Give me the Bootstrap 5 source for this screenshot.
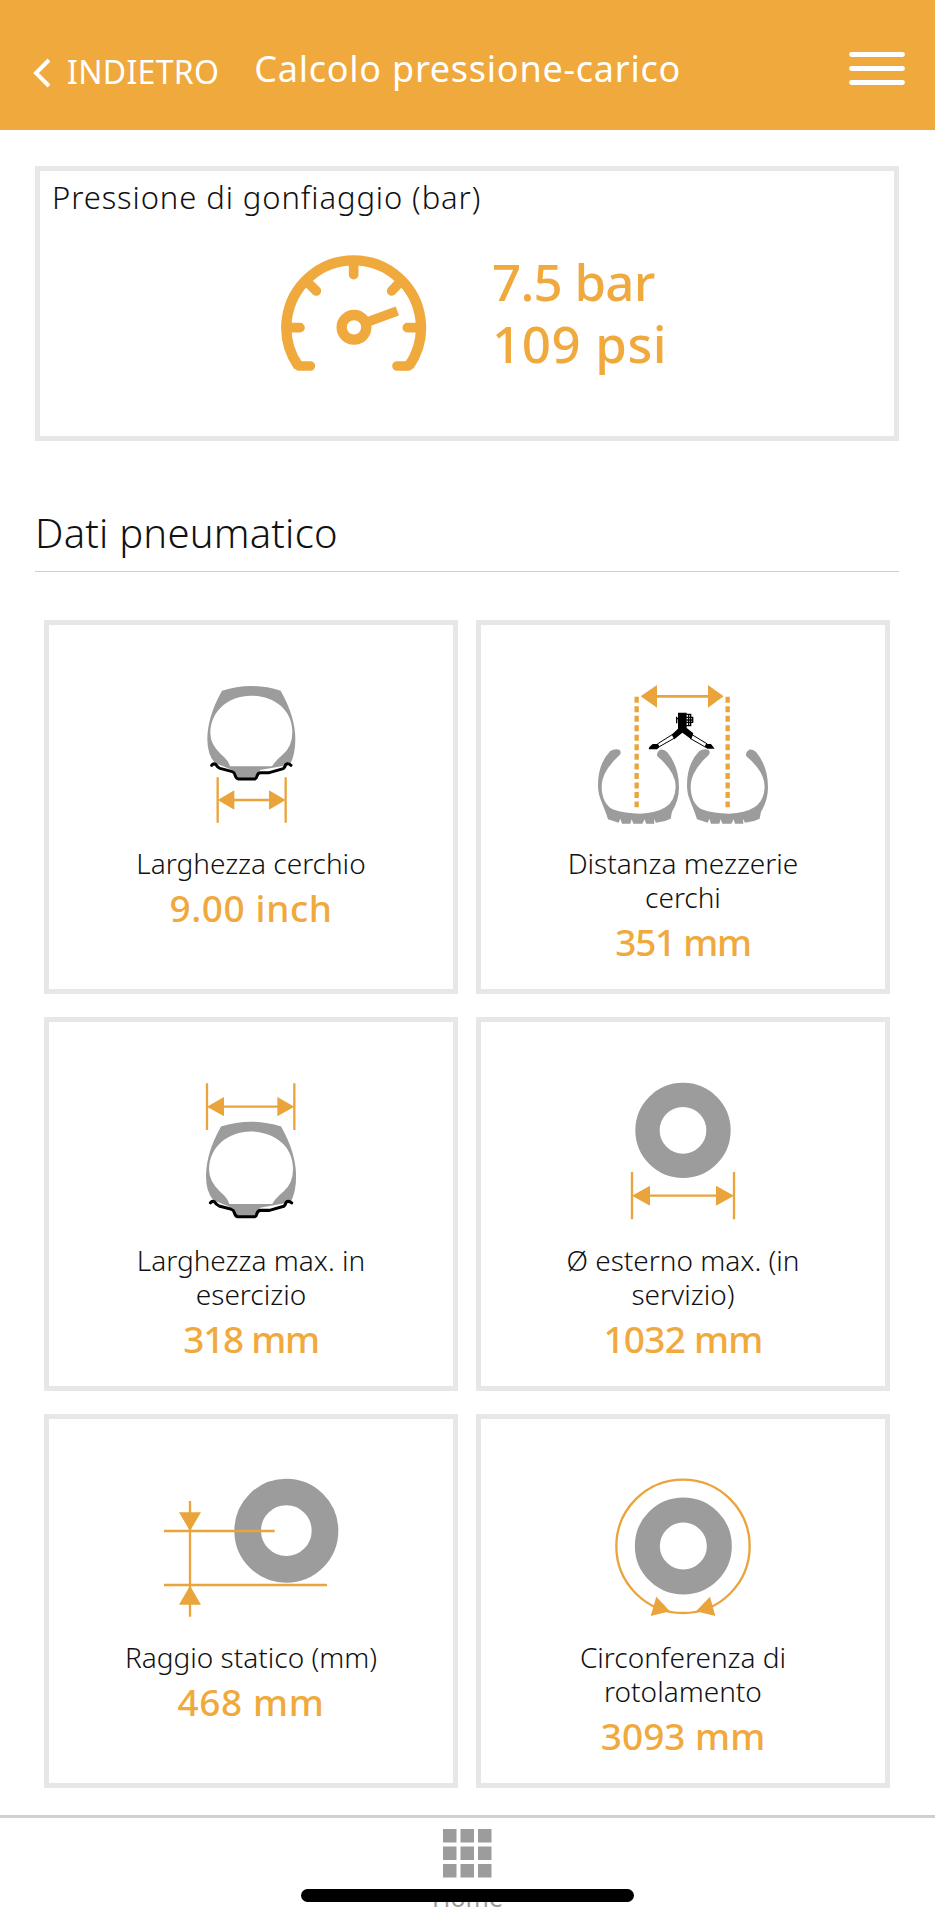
<!DOCTYPE html>
<html lang="it">
<head>
<meta charset="utf-8">
<meta name="viewport" content="width=device-width, initial-scale=1">
<title>Calcolo pressione-carico</title>
<link href="https://cdn.jsdelivr.net/npm/bootstrap@5.3.0/dist/css/bootstrap.min.css" rel="stylesheet">
<style>
:root{--amber:#f0a93c;--tyre:#9c9c9c}
body{font-family:"Noto Sans","Open Sans",sans-serif;font-weight:300;color:#111;background:#fff;height:1920px;overflow:hidden}
.topbar{height:130px;background:var(--amber);color:#fff;padding:11px 30px 0 33px}
.back{font-size:32px;font-weight:400;line-height:44px;margin:3px 0 0 16px;letter-spacing:.3px}
.chev{margin-top:5px}
.heading{font-size:36px;font-weight:400;line-height:44px;margin:-4px 0 0 35px;letter-spacing:.75px}
.burger{margin-top:-3px}
.panel{border:5px solid #e7e7e7;height:275px;margin:36px 36px 0 35px}
.panel-label{font-size:31px;line-height:40px;padding:6px 0 0 12px;letter-spacing:.9px}
.reading{font-size:51px;line-height:62px;font-weight:500;color:var(--amber)}
.readings{margin-left:240px;margin-top:33px}
.reading-texts{margin-left:62px}
.section-title{font-size:40px;line-height:54px;font-weight:300;margin:65px 36px 0 35px;height:66px;border-bottom:1px solid #cfcfcf;letter-spacing:.2px}
.tiles{display:grid;grid-template-columns:414px 414px;gap:23px 18px;margin:48px 0 0 44px}
.tile{border:5px solid #e7e7e7;height:374px;padding-top:55px;text-align:center}
.tile svg{display:block;margin:0 auto 16px}
.tile-label{font-size:28px;line-height:34px}
.tile-value{font-size:37px;line-height:44px;margin-top:6px;font-weight:500;color:var(--amber)}
.snug{letter-spacing:-1.3px}
.snug-sm{letter-spacing:-.75px}
.airy{letter-spacing:.6px}
.tabbar{height:105px;border-top:3px solid #d0d0d0;margin-top:27px;padding-top:11px}
.tab-text{font-size:25px;line-height:34px;font-weight:400;color:var(--tyre);margin-top:2px}
.home-bar{left:301px;top:71px;width:333px;height:13px;border-radius:7px;background:#000}
.ln{fill:none;stroke:#eaa43c;stroke-width:7}
.ar{fill:#eaa43c}
.ty{fill:var(--tyre)}
.rim{fill:none;stroke:#000;stroke-width:9;stroke-linecap:round;stroke-linejoin:round}
</style>
</head>
<body>
<svg width="0" height="0" class="position-absolute" aria-hidden="true">
  <defs>
    <g id="section">
      <path class="ty" fill-rule="evenodd" d="M126 62Q213 34 302 62Q346 140 346 208Q346 254 330 284L240 300L232 326H172L162 302L104 278Q82 254 82 208Q82 140 126 62ZM150 289H276Q286 272 310 252Q337 228 337 186C337 115 277 77 213 77C149 77 91 120 91 190Q91 222 122 252Q146 272 150 289Z"/>
      <path class="rim" d="M95 286Q100 279 107 283Q112 292 120 295L157 305Q163 307 165 315Q168 327 176 327H225Q229 326 231 318Q234 308 242 308H268L310 296Q314 293 317 284Q324 278 333 286"/>
    </g>
    <g id="open-tyre">
      <path class="ty" d="M91 243Q104 235 118 239Q126 246 119 255Q64 305 65 350Q66 400 98 418Q135 431 180 431Q228 430 256 412Q286 392 287 350Q287 305 232 259Q228 247 240 239Q252 236 262 247Q297 290 297 352Q297 392 276 425L272 446L255 453L228 458L222 446L223 461H198L194 448L187 461H160L155 448L151 461H126L121 446L116 458L84 448L78 430L64 394Q54 372 54 346Q54 280 91 243Z"/>
    </g>
  </defs>
</svg>

<header class="topbar d-flex align-items-center">
  <svg class="chev" width="18" height="30" viewBox="0 0 18 30"><path d="M16 2 3 15 16 28" fill="none" stroke="#fff" stroke-width="4"/></svg>
  <div class="back">INDIETRO</div>
  <h1 class="heading">Calcolo pressione-carico</h1>
  <svg class="burger ms-auto" width="56" height="36" viewBox="0 0 56 36"><path d="M2.500 3.500H53.500M2.500 17.500H53.500M2.500 31.500H53.500" stroke="#fff" stroke-width="4.800" stroke-linecap="round"/></svg>
</header>

<main>
  <section class="panel">
    <div class="panel-label">Pressione di gonfiaggio (bar)</div>
    <div class="d-flex align-items-start readings">
      <svg class="flex-shrink-0" width="150" height="125" viewBox="280 250 150 125">
        <g transform="translate(260 230) scale(.33333)" fill="none" stroke="#f0a93c" stroke-width="31">
          <path d="M115 408A202 202 0 1 1 447 408"/>
          <path d="M117 408H151M445 408H411" stroke-width="29" stroke-linecap="round"/>
          <path d="M281 95V134M140 154 169 183M422 154 395 183M82 293H120M480 293H442" stroke-width="29" stroke-linecap="round"/>
          <circle cx="282" cy="292" r="37"/>
          <path d="M322 276 412 243" stroke-width="28"/>
        </g>
      </svg>
      <div class="reading-texts">
        <div class="reading snug-sm">7.5 bar</div>
        <div class="reading airy">109 psi</div>
      </div>
    </div>
  </section>

  <h2 class="section-title">Dati pneumatico</h2>

  <div class="tiles">
    <div class="tile">
      <svg width="210" height="150" viewBox="146 680 210 150">
        <g transform="translate(180 670) scale(.33333)">
          <use href="#section"/>
          <path class="ln" d="M113 322V458M317 322V458M150 390H280"/>
          <path class="ar" d="M113 390 163 361V419ZM317 390 267 361V419Z"/>
        </g>
      </svg>
      <div class="tile-label">Larghezza cerchio</div>
      <div class="tile-value airy">9.00 inch</div>
    </div>
    <div class="tile">
      <svg width="210" height="150" viewBox="578 680 210 150">
        <g transform="translate(580 670) scale(.33333)">
          <use href="#open-tyre"/>
          <use href="#open-tyre" transform="translate(267 0)"/>
          <path class="ln" style="stroke-width:13;stroke-dasharray:18 10.600" d="M170 80V412M443 80V412"/>
          <path class="ln" style="stroke-width:8" d="M220 79H395"/>
          <path class="ar" d="M182 79 231 45V113ZM431 79 384 45V113Z"/>
          <path d="M294 128H320V174L340 190 334 208 307 188 283 208 275 194 294 176Z"/>
          <path d="M319 133H332V167H319M319 142H338V157H319M326 133V167M290 140V160M294 146H290M319 150H338" fill="none" stroke="#000" stroke-width="4"/>
          <path d="M278 193 232 222M284 204 238 230M336 194 382 222M330 205 374 230" fill="none" stroke="#000" stroke-width="3"/>
          <path d="M218 222H234L239 231 231 238H206L208 231ZM378 222H393L404 236H383L373 231Z"/>
        </g>
      </svg>
      <div class="tile-label">Distanza mezzerie<br>cerchi</div>
      <div class="tile-value snug">351 mm</div>
    </div>
    <div class="tile">
      <svg width="210" height="150" viewBox="146 1077 210 150">
        <g transform="translate(180 1070) scale(.33333)">
          <use href="#section" transform="translate(-6 106) scale(1.024 1.023)"/>
          <path class="ln" d="M81 40V180M343 40V180M120 110H300"/>
          <path class="ar" d="M81 110 132 81V139ZM343 110 292 81V139Z"/>
        </g>
      </svg>
      <div class="tile-label">Larghezza max. in<br>esercizio</div>
      <div class="tile-value snug">318 mm</div>
    </div>
    <div class="tile">
      <svg width="210" height="150" viewBox="578 1077 210 150">
        <g transform="translate(610 1070) scale(.33333)">
          <circle cx="219" cy="181" r="106.500" fill="none" stroke="#9c9c9c" stroke-width="73"/>
          <path class="ln" d="M66 306V448M372 306V448M110 377H330"/>
          <path class="ar" d="M66 377 120 347V407ZM372 377 318 347V407Z"/>
        </g>
      </svg>
      <div class="tile-label">Ø esterno max. (in<br>servizio)</div>
      <div class="tile-value snug-sm">1032 mm</div>
    </div>
    <div class="tile">
      <svg width="210" height="150" viewBox="146 1474 210 150">
        <g transform="translate(150 1460) scale(.33333)">
          <circle cx="409" cy="212" r="116" fill="none" stroke="#9c9c9c" stroke-width="80"/>
          <path class="ln" d="M42 213H374M42 375H531M120 123V470"/>
          <path class="ar" d="M87 157H153L120 213ZM87 434H153L120 377Z"/>
        </g>
      </svg>
      <div class="tile-label">Raggio statico (mm)</div>
      <div class="tile-value airy">468 mm</div>
    </div>
    <div class="tile">
      <svg width="210" height="150" viewBox="578 1474 210 150">
        <g transform="translate(590 1460) scale(.33333)">
          <circle cx="280" cy="258" r="108" fill="none" stroke="#9c9c9c" stroke-width="75"/>
          <circle class="ln" cx="279" cy="259" r="200"/>
          <path class="ar" d="M199 410 240 454 182 468ZM360 410 318 454 376 468Z"/>
        </g>
      </svg>
      <div class="tile-label">Circonferenza di<br>rotolamento</div>
      <div class="tile-value">3093 mm</div>
    </div>
  </div>
</main>

<nav class="tabbar position-relative d-flex flex-column align-items-center">
  <svg width="49" height="49" viewBox="0 0 49 49" fill="#9c9c9c"><path d="M0 0h13.500v13.500H0zM17.500 0H31v13.500H17.500zM35 0h13.500v13.500H35zM0 17.500h13.500V31H0zM17.500 17.500H31V31H17.500zM35 17.500h13.500V31H35zM0 35h13.500v13.500H0zM17.500 35H31v13.500H17.500zM35 35h13.500v13.500H35z"/></svg>
  <div class="tab-text">Home</div>
  <div class="home-bar position-absolute"></div>
</nav>
<script src="https://cdn.jsdelivr.net/npm/bootstrap@5.3.0/dist/js/bootstrap.bundle.min.js"></script>
</body>
</html>
